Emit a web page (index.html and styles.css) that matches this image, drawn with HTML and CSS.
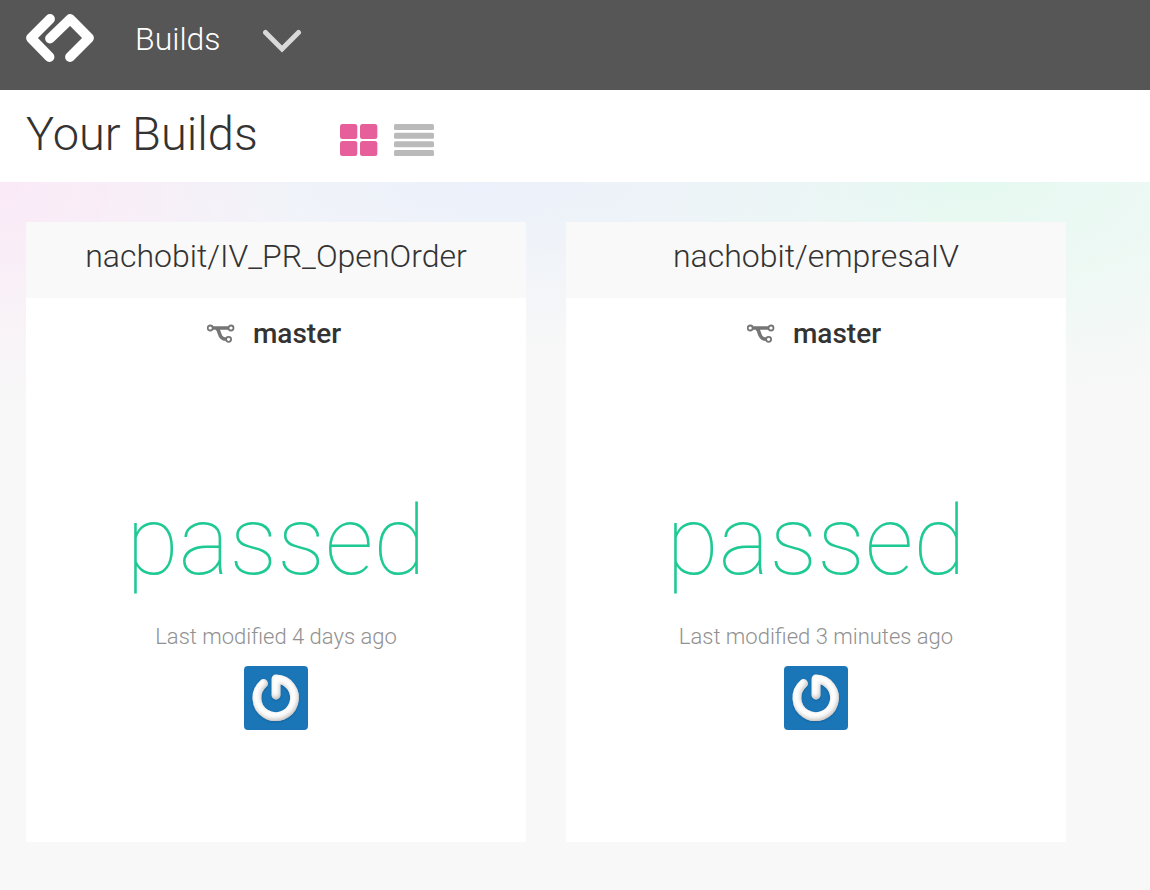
FILE: index.html
```html
<!DOCTYPE html>
<html lang="en">
<head>
<meta charset="utf-8">
<meta name="viewport" content="width=device-width, initial-scale=1">
<title>Your Builds</title>
<link rel="stylesheet" href="styles.css">
</head>
<body>
<svg class="defs" aria-hidden="true">
  <defs>
    <filter id="bevel" x="-20%" y="-20%" width="140%" height="140%">
      <feGaussianBlur in="SourceAlpha" stdDeviation="2" result="soft"/>
      <feOffset in="soft" dx="-1" dy="-2" result="shifted"/>
      <feComposite in="SourceAlpha" in2="shifted" operator="out" result="edge"/>
      <feFlood flood-color="#9c958c" flood-opacity="0.7"/>
      <feComposite in2="edge" operator="in" result="shade"/>
      <feDropShadow in="SourceGraphic" dx="0" dy="1" stdDeviation="1" flood-color="#0d4f80" flood-opacity="0.5" result="base"/>
      <feMerge><feMergeNode in="base"/><feMergeNode in="shade"/></feMerge>
    </filter>
    <symbol id="branch" viewBox="0 0 28 20">
      <path d="M5 4H22M9 4.500C14 5 10 14.500 19 15.300" fill="none" stroke="#757575" stroke-width="3.600"/>
      <g fill="#fff" stroke="#757575" stroke-width="1.800">
        <circle cx="3.200" cy="4" r="2.500"/><circle cx="24" cy="4" r="2.500"/><circle cx="21.600" cy="15.300" r="2.500"/>
      </g>
    </symbol>
    <symbol id="power" viewBox="0 0 64 64">
      <path d="M19.500 17.500A18.800 18.800 0 1 0 32 13V29" fill="none" stroke="#fff" stroke-width="8.800" stroke-linecap="round" stroke-linejoin="round" filter="url(#bevel)"/>
    </symbol>
  </defs>
</svg>
<header class="topbar">
  <a class="logo" href="#" aria-label="Home">
    <svg width="70" height="50" viewBox="0 0 70 50" fill="none" stroke="#fff" stroke-width="9.800" stroke-linecap="round" stroke-linejoin="round">
      <path d="M25 6L6 25L24.500 44"/>
      <path d="M25 25.500L45.200 6L64 25L45 44"/>
    </svg>
  </a>
  <button class="menu" type="button">
    <span>Builds</span>
    <svg width="40" height="26" viewBox="0 0 40 26" fill="none" stroke="#d9d9d9" stroke-width="5"><path d="M2.500 4.500L19 21L35.500 4.500" stroke-linecap="round"/></svg>
  </button>
</header>
<section class="heading">
  <h1>Your Builds</h1>
  <div class="views">
    <button type="button" aria-label="Grid view" aria-pressed="true">
      <svg width="38" height="32" viewBox="0 0 38 32" fill="#e65f9a"><rect width="17.300" height="15" rx="2.500"/><rect x="20" width="17.300" height="15" rx="2.500"/><rect y="17" width="17.300" height="15" rx="2.500"/><rect x="20" y="17" width="17.300" height="15" rx="2.500"/></svg>
    </button>
    <button type="button" aria-label="List view" aria-pressed="false">
      <svg width="40" height="32" viewBox="0 0 40 32" fill="#bababa"><rect width="40" height="6" rx="1.500"/><rect y="8.700" width="40" height="6" rx="1.500"/><rect y="17.300" width="40" height="6" rx="1.500"/><rect y="26" width="40" height="6" rx="1.500"/></svg>
    </button>
  </div>
</section>
<main class="builds">
  <article class="card">
    <h2>nachobit/IV_PR_OpenOrder</h2>
    <p class="branch"><svg width="28" height="20"><use href="#branch"/></svg>master</p>
    <p class="status">passed</p>
    <p class="modified">Last modified 4 days ago</p>
    <svg class="avatar" role="img" aria-label="nachobit"><use href="#power"/></svg>
  </article>
  <article class="card">
    <h2>nachobit/empresaIV</h2>
    <p class="branch"><svg width="28" height="20"><use href="#branch"/></svg>master</p>
    <p class="status">passed</p>
    <p class="modified">Last modified 3 minutes ago</p>
    <svg class="avatar" role="img" aria-label="nachobit"><use href="#power"/></svg>
  </article>
</main>
</body>
</html>
```
FILE: styles.css
```css
* { box-sizing: border-box; }
body {
  margin: 0;
  min-height: 100vh;
  display: flex;
  flex-direction: column;
  background: #f8f8f8;
  color: #333;
  font-family: Roboto, "Liberation Sans", sans-serif;
  font-weight: 300;
}
h1, h2, p { margin: 0; font-weight: 300; }
svg { display: block; flex: none; }
button { border: 0; padding: 0; background: none; color: inherit; font: inherit; cursor: pointer; }
.defs { position: absolute; width: 0; height: 0; }
.topbar {
  display: flex;
  align-items: flex-start;
  gap: 40px;
  padding: 13px 25px 25px;
  background: #565656;
  color: #fff;
}
.menu { display: flex; align-items: center; gap: 42px; font-size: 32px; line-height: 52px; }
.menu svg { margin-top: 4px; }
.heading {
  display: flex;
  align-items: center;
  gap: 82px;
  padding: 14px 26px 18px;
  background: #fff;
}
.heading h1 { font-size: 47px; line-height: 60px; }
.views { display: flex; gap: 16px; padding-top: 12px; }
.builds {
  flex: 1;
  display: grid;
  grid-template-columns: repeat(auto-fill, minmax(min(100%, 500px), 500px));
  align-content: start;
  gap: 40px;
  padding: 40px 26px 48px;
  background:
    radial-gradient(ellipse 300px 220px at 0 0, #fae9f7, #fae9f700),
    radial-gradient(ellipse 480px 170px at 42% 0, #ebf0fa, #ebf0fa00),
    radial-gradient(ellipse 480px 220px at 84% 0, #e5f9f1, #e5f9f100);
}
.card {
  display: flex;
  flex-direction: column;
  align-items: center;
  padding-bottom: 112px;
  background: #fff;
  text-align: center;
}
.card h2 {
  width: 100%;
  padding: 14px 16px 22px;
  background: #f9f9f9;
  font-size: 32px;
  line-height: 40px;
}
.branch {
  display: flex;
  align-items: center;
  gap: 18px;
  padding: 16px 4px 16px 0;
  font-size: 28px;
  font-weight: 500;
  line-height: 40px;
}
.status {
  padding: 115px 0 24px;
  color: #1fc993;
  font-size: 96px;
  font-weight: 100;
  line-height: 112px;
}
.modified { color: #919191; font-size: 22px; line-height: 32px; }
.avatar { width: 64px; height: 64px; margin-top: 13px; border-radius: 4px; background: #1a76b7; }
```
